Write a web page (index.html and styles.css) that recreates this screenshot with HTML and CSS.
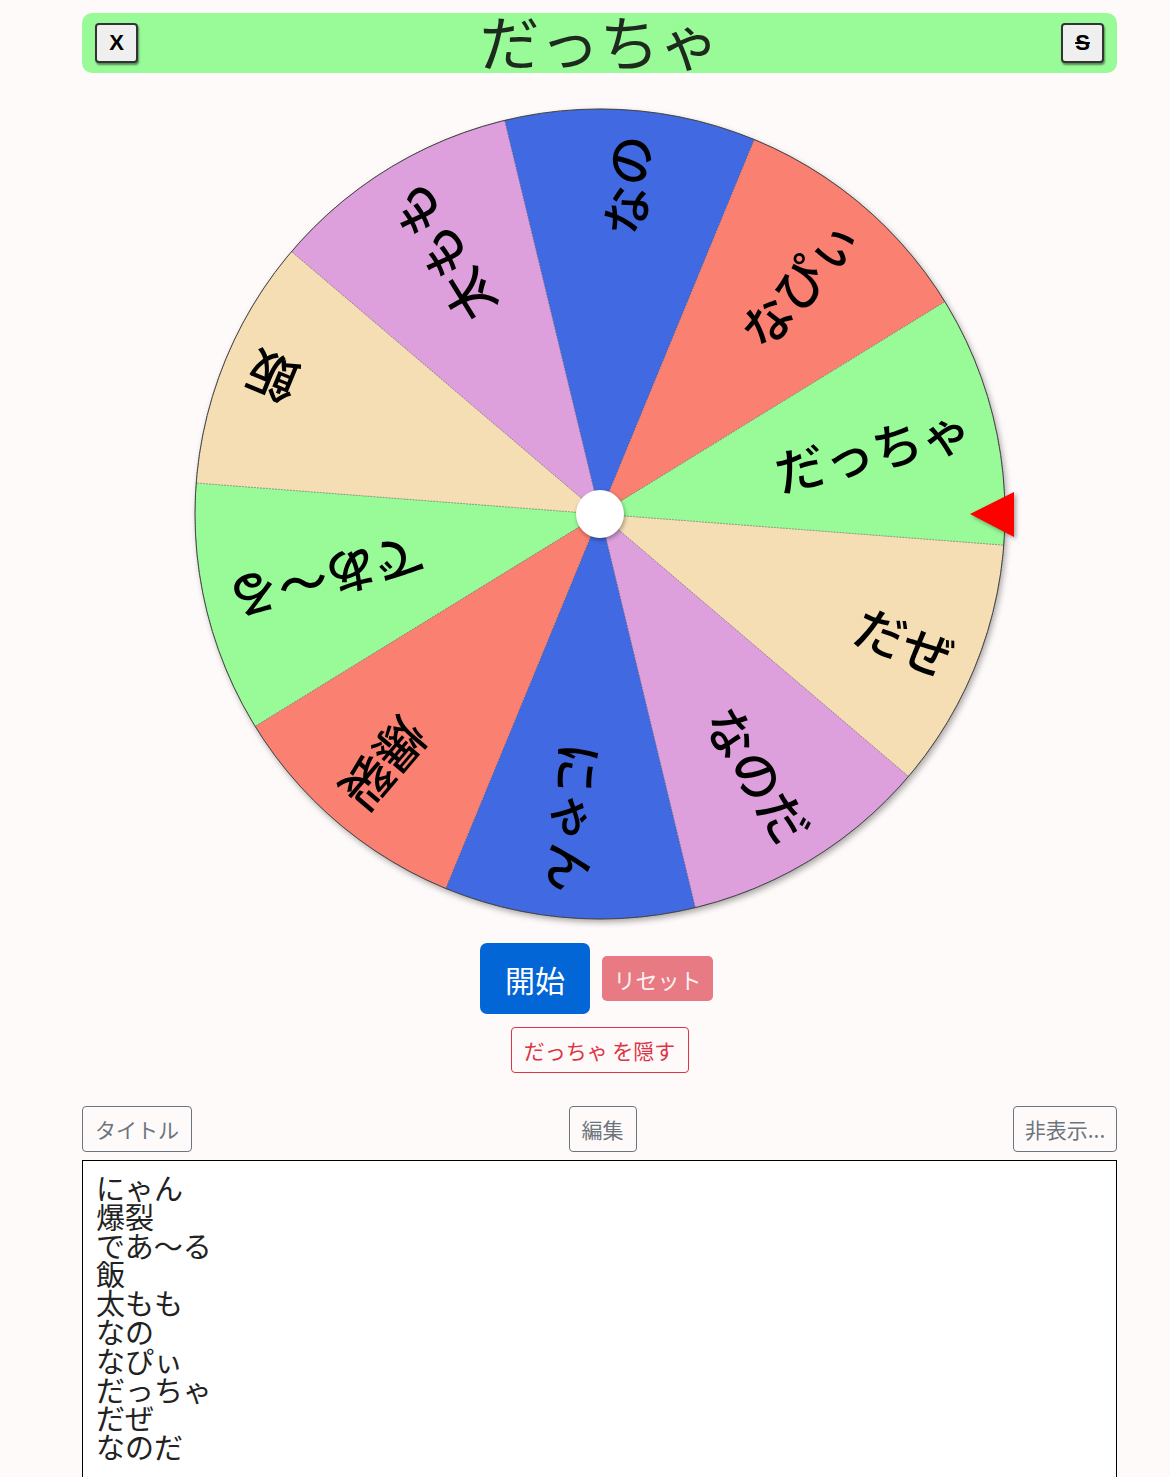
FILE: index.html
```html
<!DOCTYPE html>
<html lang="ja">
<head>
<meta charset="utf-8">
<title>だっちゃ</title>
<link rel="stylesheet" href="styles.css">
</head>
<body>
<div class="container">
  <header class="titlebar">
    <button class="sq-btn">X</button>
    <h1 class="title">だっちゃ</h1>
    <button class="sq-btn"><s>S</s></button>
  </header>

  <div class="wheel-wrap">
    <svg class="wheel" width="840" height="840" viewBox="-420 -420 840 840">
      <defs>
        <path id="wedge" d="M0 0 L385.18 -125.15 A405 405 0 0 1 385.18 125.15 Z"/>
      </defs>
      <circle class="rim-shadow" cx="0" cy="0" r="405"/>
      <g class="wedges">
        <use href="#wedge" class="seg wheat" transform="rotate(22.4)"/>
        <use href="#wedge" class="seg plum" transform="rotate(58.4)"/>
        <use href="#wedge" class="seg blue" transform="rotate(94.4)"/>
        <use href="#wedge" class="seg salmon" transform="rotate(130.4)"/>
        <use href="#wedge" class="seg green" transform="rotate(166.4)"/>
        <use href="#wedge" class="seg wheat" transform="rotate(202.4)"/>
        <use href="#wedge" class="seg plum" transform="rotate(238.4)"/>
        <use href="#wedge" class="seg blue" transform="rotate(274.4)"/>
        <use href="#wedge" class="seg salmon" transform="rotate(310.4)"/>
        <use href="#wedge" class="seg green" transform="rotate(346.4)"/>
      </g>
      <circle class="rim" cx="0" cy="0" r="405"/>
      <g class="labels">
        <text x="380" y="0" transform="rotate(22.4)">だぜ</text>
        <text x="380" y="0" transform="rotate(58.4)">なのだ</text>
        <text x="380" y="0" transform="rotate(94.4)">にゃん</text>
        <text x="380" y="0" transform="rotate(130.4)">爆裂</text>
        <text x="380" y="0" transform="rotate(166.4)">であ〜る</text>
        <text x="380" y="0" transform="rotate(202.4)">飯</text>
        <text x="380" y="0" transform="rotate(238.4)">太もも</text>
        <text x="380" y="0" transform="rotate(274.4)">なの</text>
        <text x="380" y="0" transform="rotate(310.4)">なぴぃ</text>
        <text x="380" y="0" transform="rotate(346.4)">だっちゃ</text>
      </g>
      <circle class="hub" cx="0" cy="0" r="24"/>
      <polygon class="pointer" points="370,0 414,-22 414,23"/>
    </svg>
  </div>

  <div class="controls">
    <button class="btn btn-start">開始</button>
    <button class="btn btn-reset">リセット</button>
  </div>
  <div class="controls hide-row">
    <button class="btn btn-hide">だっちゃ を隠す</button>
  </div>

  <div class="toolbar">
    <button class="btn btn-gray btn-title">タイトル</button>
    <button class="btn btn-gray btn-edit">編集</button>
    <button class="btn btn-gray btn-hidden">非表示...</button>
  </div>

  <textarea class="items">にゃん
爆裂
であ〜る
飯
太もも
なの
なぴぃ
だっちゃ
だぜ
なのだ</textarea>
</div>
</body>
</html>
```

FILE: styles.css
```css
html, body {
  margin: 0;
  padding: 0;
  background: #fffafa;
  font-family: "Noto Sans CJK JP", "Noto Sans", sans-serif;
  color: #212529;
}

.container {
  width: 1035px;
  margin-left: 82px;
}

.titlebar {
  margin-top: 13px;
  height: 60px;
  background: #98fb98;
  border-radius: 10px;
  display: flex;
  align-items: center;
  justify-content: space-between;
  padding: 0 13px;
  box-sizing: border-box;
}

.title {
  margin: -17px 0 -10px 0;
  font-size: 60px;
  font-weight: 400;
  line-height: 87px;
  color: #1e2a1e;
  font-family: "Noto Sans CJK JP", sans-serif;
}

.sq-btn {
  width: 43px;
  height: 40px;
  padding: 0;
  background: #efefef;
  border: 2px solid #333;
  border-radius: 4px;
  box-shadow: 1px 2px 2px rgba(0, 0, 0, 0.45);
  font-family: "Liberation Sans", Arial, sans-serif;
  font-weight: 700;
  font-size: 22px;
  color: #000;
}

.sq-btn s {
  text-decoration-thickness: 2px;
}

.wheel-wrap {
  margin-top: 21px;
  display: flex;
  justify-content: center;
  height: 840px;
}

.wheel {
  display: block;
  overflow: visible;
}

.rim-shadow {
  fill: #fff;
  filter: drop-shadow(2px 3px 3px rgba(0, 0, 0, 0.35));
}

.seg {
  stroke: rgba(60, 60, 60, 0.45);
  stroke-width: 0.7;
  stroke-dasharray: 2 1;
}

.wheat { fill: #f5deb3; }
.plum { fill: #dda0dd; }
.blue { fill: #4169e1; }
.salmon { fill: #fa8072; }
.green { fill: #98fb98; }

.rim {
  fill: none;
  stroke: #444;
  stroke-width: 1;
}

.labels text {
  font-family: "Noto Sans CJK JP", sans-serif;
  font-size: 50px;
  font-weight: 500;
  fill: #000;
  text-anchor: end;
  dominant-baseline: central;
}

.hub {
  fill: #fff;
  filter: drop-shadow(1px 2px 2px rgba(0, 0, 0, 0.35));
}

.pointer {
  fill: #ff0000;
  filter: drop-shadow(2px 2px 2px rgba(0, 0, 0, 0.35));
}

.controls {
  display: flex;
  justify-content: center;
  align-items: center;
  gap: 12px;
  margin-top: 9px;
  padding-right: 6px;
}

.hide-row {
  margin-top: 13px;
  padding-right: 0;
}

.btn {
  font-family: "Noto Sans CJK JP", sans-serif;
  box-sizing: border-box;
  display: inline-flex;
  align-items: center;
  justify-content: center;
  padding: 0;
  cursor: pointer;
}

.btn-start {
  width: 110px;
  height: 71px;
  background: #0366d6;
  color: #fff;
  border: none;
  border-radius: 7px;
  font-size: 30px;
}

.btn-reset {
  width: 111px;
  height: 45px;
  background: #e87a84;
  color: #fdf0f1;
  border: none;
  border-radius: 5px;
  font-size: 22px;
}

.btn-hide {
  width: 178px;
  height: 46px;
  background: transparent;
  color: #dc3545;
  border: 1px solid #dc3545;
  border-radius: 4px;
  font-size: 21px;
}

.toolbar {
  margin-top: 33px;
  display: flex;
  justify-content: space-between;
  align-items: center;
}

.btn-gray {
  height: 46px;
  background: transparent;
  color: #6c757d;
  border: 1px solid #6c757d;
  border-radius: 4px;
  font-size: 21px;
}

.btn-title { width: 110px; }
.btn-edit { width: 68px; }
.btn-hidden { width: 104px; }

.items {
  display: block;
  margin-top: 8px;
  width: 1035px;
  height: 340px;
  box-sizing: border-box;
  border: 1px solid #000;
  border-radius: 0;
  background: #fff;
  padding: 12px 13px;
  font-family: "Noto Sans CJK JP", sans-serif;
  font-size: 29px;
  line-height: 28.8px;
  color: #222;
  resize: none;
  overflow: hidden;
}
```
